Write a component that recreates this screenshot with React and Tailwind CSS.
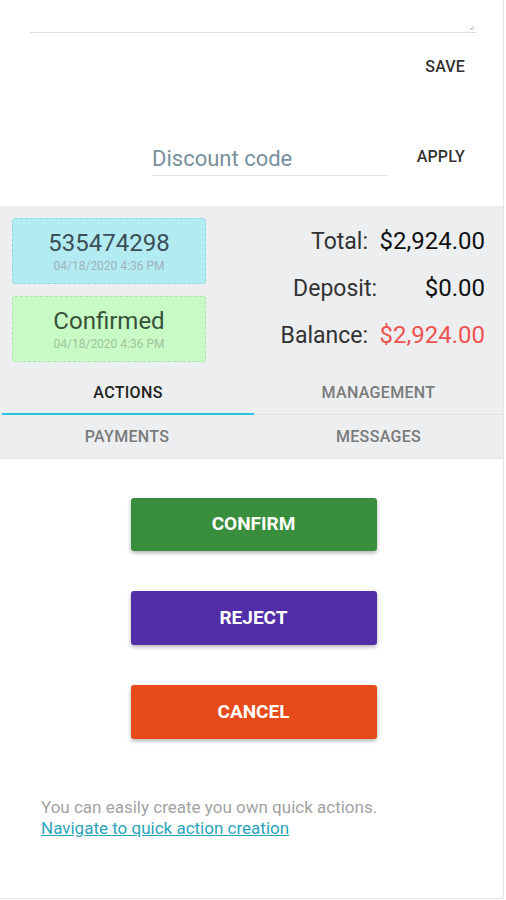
import React from "react";

export default function App() {
  const font = { fontFamily: "Roboto, 'Noto Sans', sans-serif" };
  return (
    <div style={font} className="w-[506px] h-[900px] bg-white flex flex-col">
      <div className="w-[504px] h-[899px] border-r border-b border-[#e6e6e6] flex flex-col">
        {/* top textarea remnant */}
        <div className="h-[33px] mx-[30px] w-[446px] border-b border-[#dcdcdc] relative">
          <svg className="absolute right-[1px] bottom-[1px]" width="6" height="6" viewBox="0 0 6 6">
            <path d="M5 1 L1 5 M5 3.5 L3.5 5" stroke="#9a9a9a" strokeWidth="0.8" />
          </svg>
        </div>
        <div className="flex justify-end pr-[38px] pt-[22px]">
          <span className="text-[16px] font-medium text-[#333] tracking-[0.01em]">SAVE</span>
        </div>
        {/* discount */}
        <div className="flex items-end mt-[47px] h-[50px]">
          <div className="ml-[152px] w-[236px] border-b border-[#e3e3e3] pb-[1px]">
            <span className="text-[22px] text-[#78909c] leading-[30px]">Discount code</span>
          </div>
          <div className="ml-auto pr-[38px] self-start pt-[19px]">
            <span className="text-[16px] font-medium text-[#333] tracking-[0.01em]">APPLY</span>
          </div>
        </div>
        {/* gray panel */}
        <div className="mt-[30px] bg-[#eceef0]">
          <div className="flex pt-[12px] px-[12px] h-[166px]">
            <div className="flex flex-col gap-[12px] w-[194px]">
              <div className="h-[66px] bg-[#b2ebf2] border border-dashed border-[#94d6e0] rounded-[3px] flex flex-col items-center justify-center">
                <span className="text-[24px] leading-[28px] text-[#3c4f57]">535474298</span>
                <span className="text-[12px] leading-[14px] text-[#9db3b8] mt-[2px]">04/18/2020 4:36 PM</span>
              </div>
              <div className="h-[66px] bg-[#c8fac6] border border-dashed border-[#a8e6a5] rounded-[3px] flex flex-col items-center justify-center">
                <span className="text-[24px] leading-[28px] text-[#38523a]">Confirmed</span>
                <span className="text-[12px] leading-[14px] text-[#9ec29c] mt-[2px]">04/18/2020 4:36 PM</span>
              </div>
            </div>
            <div className="flex-1 flex flex-col items-end pr-[6px] pt-[8px] gap-[16px] leading-[31px]">
              <div className="flex items-baseline">
                <span className="text-[23px] text-[#333]">Total:</span>
                <span className="w-[117px] text-right text-[24px] text-[#111]">$2,924.00</span>
              </div>
              <div className="flex items-baseline">
                <span className="text-[23px] text-[#333]">Deposit:</span>
                <span className="w-[108px] text-right text-[24px] text-[#111]">$0.00</span>
              </div>
              <div className="flex items-baseline">
                <span className="text-[23px] text-[#333]">Balance:</span>
                <span className="w-[117px] text-right text-[24px] text-[#ef5350]">$2,924.00</span>
              </div>
            </div>
          </div>
          {/* tabs */}
          <div className="border-b border-[#dfe1e3]">
            <div className="flex h-[43px] border-b border-[#dfe1e3]">
              <div className="w-[252px] ml-[2px] flex items-center justify-center border-b-[2px] border-[#26c6da] -mb-[1px]">
                <span className="text-[16px] font-medium text-[#222] tracking-[0.02em]">ACTIONS</span>
              </div>
              <div className="flex-1 flex items-center justify-center">
                <span className="text-[16px] font-medium text-[#7a7a7a] tracking-[0.02em]">MANAGEMENT</span>
              </div>
            </div>
            <div className="flex h-[43px]">
              <div className="w-[254px] flex items-center justify-center">
                <span className="text-[16px] font-medium text-[#7a7a7a] tracking-[0.02em]">PAYMENTS</span>
              </div>
              <div className="flex-1 flex items-center justify-center">
                <span className="text-[16px] font-medium text-[#7a7a7a] tracking-[0.02em]">MESSAGES</span>
              </div>
            </div>
          </div>
        </div>
        {/* actions */}
        <div className="flex flex-col items-center gap-[40px] pt-[39px] pl-[4px]">
          <button className="w-[246px] h-[53px] bg-[#388e3c] rounded-[3px] shadow-[0_2px_4px_rgba(0,0,0,0.3)] text-white font-bold text-[19px]">CONFIRM</button>
          <button className="w-[246px] h-[54px] bg-[#512da8] rounded-[3px] shadow-[0_2px_4px_rgba(0,0,0,0.3)] text-white font-bold text-[19px]">REJECT</button>
          <button className="w-[246px] h-[54px] bg-[#e64a19] rounded-[3px] shadow-[0_2px_4px_rgba(0,0,0,0.3)] text-white font-bold text-[19px]">CANCEL</button>
        </div>
        <div className="pl-[41px] mt-[58px] text-[17px] leading-[21px]">
          <div className="text-[#a3a3a3]">You can easily create you own quick actions.</div>
          <a className="text-[#2aa4ba] underline">Navigate to quick action creation</a>
        </div>
      </div>
    </div>
  );
}
